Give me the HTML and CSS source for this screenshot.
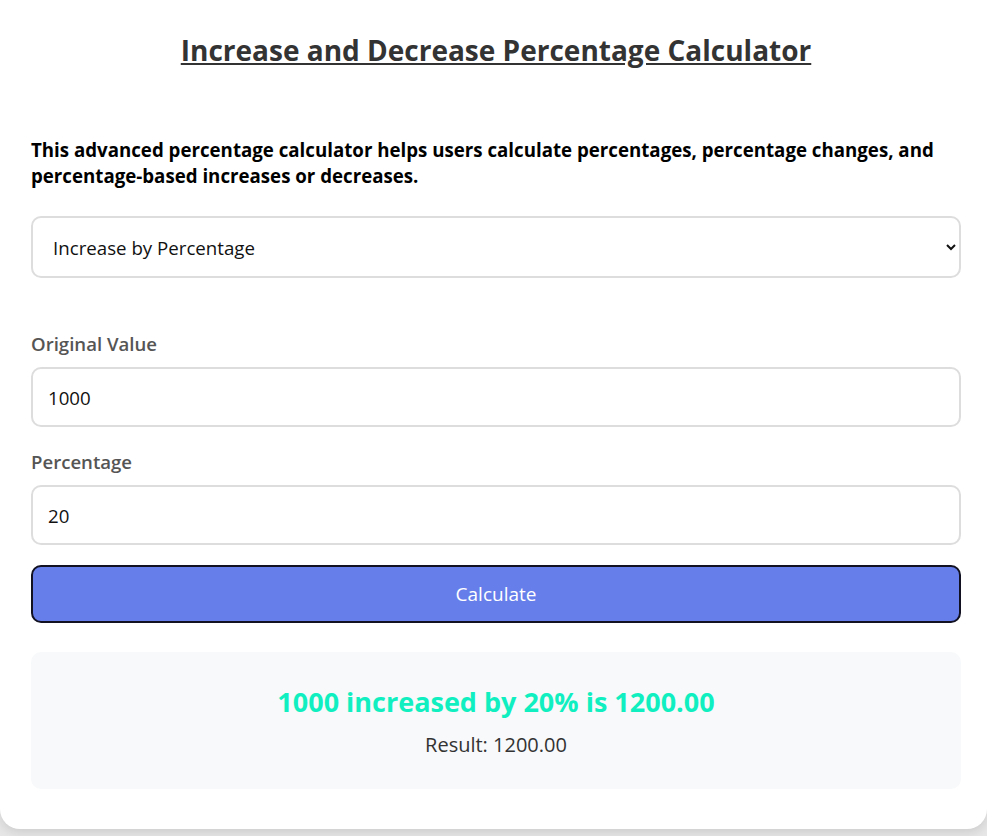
FILE: index.html
```html
<!DOCTYPE html>
<html lang="en">
<head>
    <meta charset="UTF-8">
    <meta name="viewport" content="width=device-width, initial-scale=1.0">
    <title>Increase and Decrease Percentage Calculator</title>
    <link rel="stylesheet" href="styles.css">
</head>
<body>
    <div class="calculator">
        <h1>Increase and Decrease Percentage Calculator</h1>
        <p class="intro">This advanced percentage calculator helps users calculate percentages, percentage changes, and percentage-based increases or decreases.</p>

        <select id="mode" class="mode-select">
            <option value="increase">Increase by Percentage</option>
            <option value="decrease">Decrease by Percentage</option>
        </select>

        <div class="field">
            <label for="value">Original Value</label>
            <input type="text" id="value" value="1000">
        </div>
        <div class="field">
            <label for="percent">Percentage</label>
            <input type="text" id="percent" value="20">
        </div>

        <button class="calc-button">Calculate</button>

        <div class="result-box">
            <div class="result-title">1000 increased by 20% is 1200.00</div>
            <div class="result-value">Result: 1200.00</div>
        </div>
    </div>
</body>
</html>
```

FILE: styles.css
```css
body {
    margin: 0;
    background-color: #e6e6e6;
    font-family: "Open Sans", "Noto Sans", sans-serif;
}
.calculator {
    background-color: #fff;
    border-radius: 0 0 20px 20px;
    box-shadow: 0 4px 10px rgba(0, 0, 0, 0.1);
    padding: 22px 26px 40px 31px;
    margin-bottom: 8px;
}
h1 {
    text-align: center;
    text-decoration: underline;
    color: #333;
    font-size: 28px;
    margin: 8px 0 0;
    line-height: 40px;
}
.intro {
    font-weight: bold;
    font-size: 18.7px;
    line-height: 26px;
    color: #000;
    margin: 67px 0 27px;
    hyphens: none;
}
.mode-select {
    display: block;
    width: 100%;
    height: 62px;
    padding: 0 16px;
    font-family: inherit;
    font-size: 18.7px;
    border: 2px solid #ddd;
    border-radius: 10px;
    background-color: #fff;
    color: #111;
    margin-bottom: 53px;
}
.field + .field {
    margin-top: 22px;
}
.field label {
    display: block;
    font-weight: 600;
    font-size: 18.6px;
    line-height: 25px;
    color: #555;
    margin-bottom: 11px;
}
.field input {
    display: block;
    box-sizing: border-box;
    width: 100%;
    height: 60px;
    padding: 0 15px;
    font-family: inherit;
    font-size: 18.7px;
    border: 2px solid #ddd;
    border-radius: 10px;
    color: #111;
}
.calc-button {
    display: block;
    width: 100%;
    height: 58px;
    margin-top: 20px;
    background-color: #667eea;
    border: 2px solid #111122;
    border-radius: 10px;
    color: #fff;
    font-family: inherit;
    font-size: 19px;
}
.result-box {
    margin-top: 29px;
    background-color: #f8f9fa;
    border-radius: 10px;
    padding: 32px 20px 31px;
    text-align: center;
}
.result-title {
    color: #10efc0;
    font-weight: bold;
    font-size: 27px;
    line-height: 36px;
    margin-bottom: 11px;
}
.result-value {
    color: #333;
    font-size: 20px;
    line-height: 27px;
}
```
